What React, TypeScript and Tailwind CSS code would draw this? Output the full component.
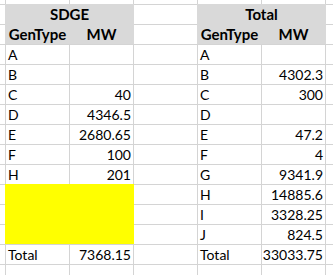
const LINE = "bg-[#d4d4d4]";

type Row = { l?: [string, string] | null; r: [string, string] };

// data rows, top to bottom; l === null means the cell sits under the yellow fill
const rows: Row[] = [
  { l: ["A", ""], r: ["A", ""] },
  { l: ["B", ""], r: ["B", "4302.3"] },
  { l: ["C", "40"], r: ["C", "300"] },
  { l: ["D", "4346.5"], r: ["D", ""] },
  { l: ["E", "2680.65"], r: ["E", "47.2"] },
  { l: ["F", "100"], r: ["F", "4"] },
  { l: ["H", "201"], r: ["G", "9341.9"] },
  { l: null, r: ["H", "14885.6"] },
  { l: null, r: ["I", "3328.25"] },
  { l: null, r: ["J", "824.5"] },
  { l: ["Total", "7368.15"], r: ["Total", "33033.75"] },
];

function Cell({ text = "", right = false }: { text?: string; right?: boolean }) {
  return (
    <div
      className={`bg-white text-[14px] leading-[19px] text-black whitespace-nowrap overflow-hidden ${
        right ? "text-right pr-[2px]" : "pl-[2px]"
      }`}
    >
      {text}
    </div>
  );
}

function Header({ title, col }: { title: string; col: "left" | "right" }) {
  return (
    <div
      className={`${
        col === "left" ? "col-start-2" : "col-start-5"
      } col-span-2 row-start-2 row-span-2 -mx-px -mt-px bg-[#d9d9d9] grid grid-cols-2 grid-rows-[20px_19px] gap-x-px pt-px px-px font-bold text-[15px] leading-[19px] text-black`}
    >
      <div className="col-span-2 text-center">{title}</div>
      <div className="text-center">GenType</div>
      <div className="text-center">MW</div>
    </div>
  );
}

export default function App() {
  return (
    <div
      className={`h-[275px] w-[333px] overflow-hidden ${LINE}`}
      style={{ fontFamily: "Lato, 'Open Sans', sans-serif" }}
    >
      <div className="grid grid-cols-[5px_63px_63px_63px_63px_63px_1fr] grid-rows-[4px_repeat(14,19px)] gap-px">
        <Header title="SDGE" col="left" />
        <Header title="Total" col="right" />
        {/* yellow block over three rows of the left table */}
        <div className="col-start-2 col-span-2 row-start-11 row-span-3 -mx-px -mt-px bg-[#ffff00]" />

        {/* top partial row */}
        {Array.from({ length: 7 }).map((_, i) => (
          <Cell key={`t${i}`} />
        ))}

        {/* header rows: only the cells outside the grey blocks */}
        {[0, 1].map((r) => [
          <Cell key={`h${r}a`} />,
          <Cell key={`h${r}b`} />,
          <Cell key={`h${r}c`} />,
        ])}

        {rows.map((row, i) => [
          <Cell key={`e${i}`} />,
          ...(row.l
            ? [<Cell key={`l1${i}`} text={row.l[0]} />, <Cell key={`l2${i}`} text={row.l[1]} right />]
            : []),
          <Cell key={`m${i}`} />,
          <Cell key={`r1${i}`} text={row.r[0]} />,
          <Cell key={`r2${i}`} text={row.r[1]} right />,
          <Cell key={`x${i}`} />,
        ])}

        {/* bottom partial row */}
        {Array.from({ length: 7 }).map((_, i) => (
          <Cell key={`b${i}`} />
        ))}
      </div>
    </div>
  );
}
